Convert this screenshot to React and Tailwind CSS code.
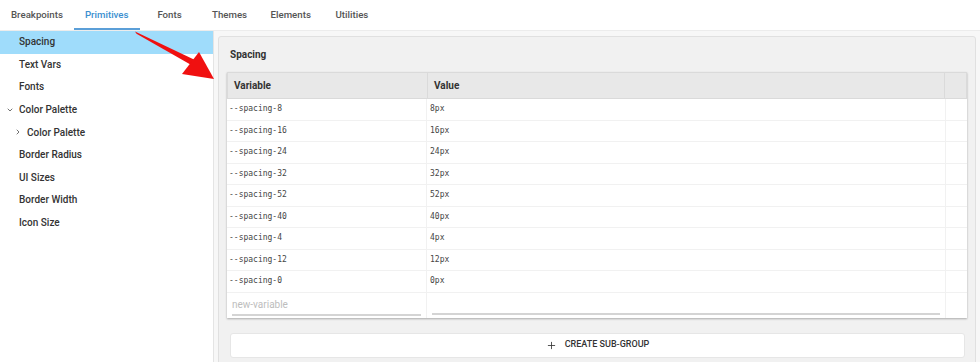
import React from 'react';
import { ChevronDown, ChevronRight, Plus } from 'lucide-react';

const TABS = ['Breakpoints', 'Primitives', 'Fonts', 'Themes', 'Elements', 'Utilities'];

const NAV = [
  { label: 'Spacing', active: true },
  { label: 'Text Vars' },
  { label: 'Fonts' },
  { label: 'Color Palette', open: true },
  { label: 'Color Palette', child: true },
  { label: 'Border Radius' },
  { label: 'UI Sizes' },
  { label: 'Border Width' },
  { label: 'Icon Size' },
];

const VARS = [
  ['--spacing-8', '8px'],
  ['--spacing-16', '16px'],
  ['--spacing-24', '24px'],
  ['--spacing-32', '32px'],
  ['--spacing-52', '52px'],
  ['--spacing-40', '40px'],
  ['--spacing-4', '4px'],
  ['--spacing-12', '12px'],
  ['--spacing-0', '0px'],
];

const mono = "font-['DejaVu_Sans_Mono','Liberation_Mono',monospace]";

const App = () => {
  return (
    <div className="relative w-[980px] h-[362px] overflow-hidden bg-white flex flex-col font-['Roboto','Noto_Sans',sans-serif] text-[#333]">
      {/* top tabs */}
      <div className="h-[31px] shrink-0 flex border-b border-[#ececec]">
        {TABS.map(t => (
          <div key={t}
            className={`min-w-[60px] px-[11px] h-full flex items-center justify-center text-[9.7px] font-medium ${t==='Primitives'?'text-[#3b8fd0] border-b-2 border-[#5b9fd8] pt-[2px]':'text-[#555]'}`}>
            {t}
          </div>
        ))}
      </div>

      <div className="flex flex-1 min-h-0">
        {/* sidebar */}
        <aside className="w-[214px] shrink-0 border-r border-[#e4e4e4] bg-white">
          {NAV.map((n, i) => (
            <div key={i}
              className={`h-[22.6px] pb-[1px] flex items-center text-[10px] font-medium text-[#333] ${n.active?'bg-[#9fdcfb]':''} ${n.open?'pl-[6px]':n.child?'pl-[14px]':'pl-[19px]'}`}>
              {n.open && <ChevronDown size={8} strokeWidth={2.5} className="mr-[5px] text-[#555]"/>}
              {n.child && <ChevronRight size={8} strokeWidth={2.5} className="mr-[5px] text-[#555]"/>}
              {n.label}
            </div>
          ))}
        </aside>

        {/* main */}
        <main className="flex-1 bg-[#f7f7f7] pl-[4px] pr-[4px] pt-[5px]">
          <div className="h-[330px] bg-[#f1f1f1] border border-[#e0e0e0] rounded-[3px] px-[8px]">
            <div className="h-[35px] flex items-center pl-[3px] text-[10px] font-bold text-[#333]">Spacing</div>

            <div className="bg-white shadow-[0_1px_2px_rgba(0,0,0,0.3)]">
              <div className="grid grid-cols-[200px_1fr_21px] h-[27px] bg-[#e8e8e8] border border-[#dadada] text-[10px] font-bold text-[#333]">
                <div className="flex items-center pl-[6px] border-r border-[#dadada]">Variable</div>
                <div className="flex items-center pl-[6px] border-r border-[#dadada]">Value</div>
                <div/>
              </div>
              {VARS.map(([k, v]) => (
                <div key={k} className={`grid grid-cols-[200px_1fr_21px] h-[21.5px] border-b border-[#f1f1f1] text-[8px] text-[#444] ${mono}`}>
                  <div className="flex items-center pl-[2px] border-r border-[#f1f1f1]">{k}</div>
                  <div className="flex items-center pl-[3px] border-r border-[#f1f1f1]">{v}</div>
                  <div/>
                </div>
              ))}
              <div className="grid grid-cols-[200px_1fr_21px] h-[25px]">
                <div className="flex flex-col justify-end pl-[5px] pr-[5px] pb-[2px] border-r border-[#f1f1f1]">
                  <div className="text-[10px] text-[#bdbdbd] pb-[2px]">new-variable</div>
                  <div className="h-[2px] bg-[#d4d4d4]"/>
                </div>
                <div className="flex flex-col justify-end pl-[5px] pr-[5px] pb-[3px] border-r border-[#f1f1f1]">
                  <div className="h-[2px] bg-[#d4d4d4]"/>
                </div>
                <div/>
              </div>
            </div>

            <button className="mt-[15px] ml-[3px] w-[735px] h-[25px] bg-white border border-[#e6e6e6] rounded-[3px] flex items-center justify-center gap-[8px] text-[9px] font-medium text-[#333] uppercase">
              <Plus size={11} strokeWidth={1.8}/>Create Sub-Group
            </button>
          </div>
        </main>
      </div>

      {/* annotation arrow */}
      <svg className="absolute left-0 top-0 pointer-events-none" width="980" height="362" viewBox="0 0 980 362">
        <polygon points="135,31.5 136.5,33.8 193,66 196,60.5" fill="#f01010"/>
        <polygon points="199,52 182,74 214,79" fill="#f01010"/>
      </svg>
    </div>
  );
};

export default App;
